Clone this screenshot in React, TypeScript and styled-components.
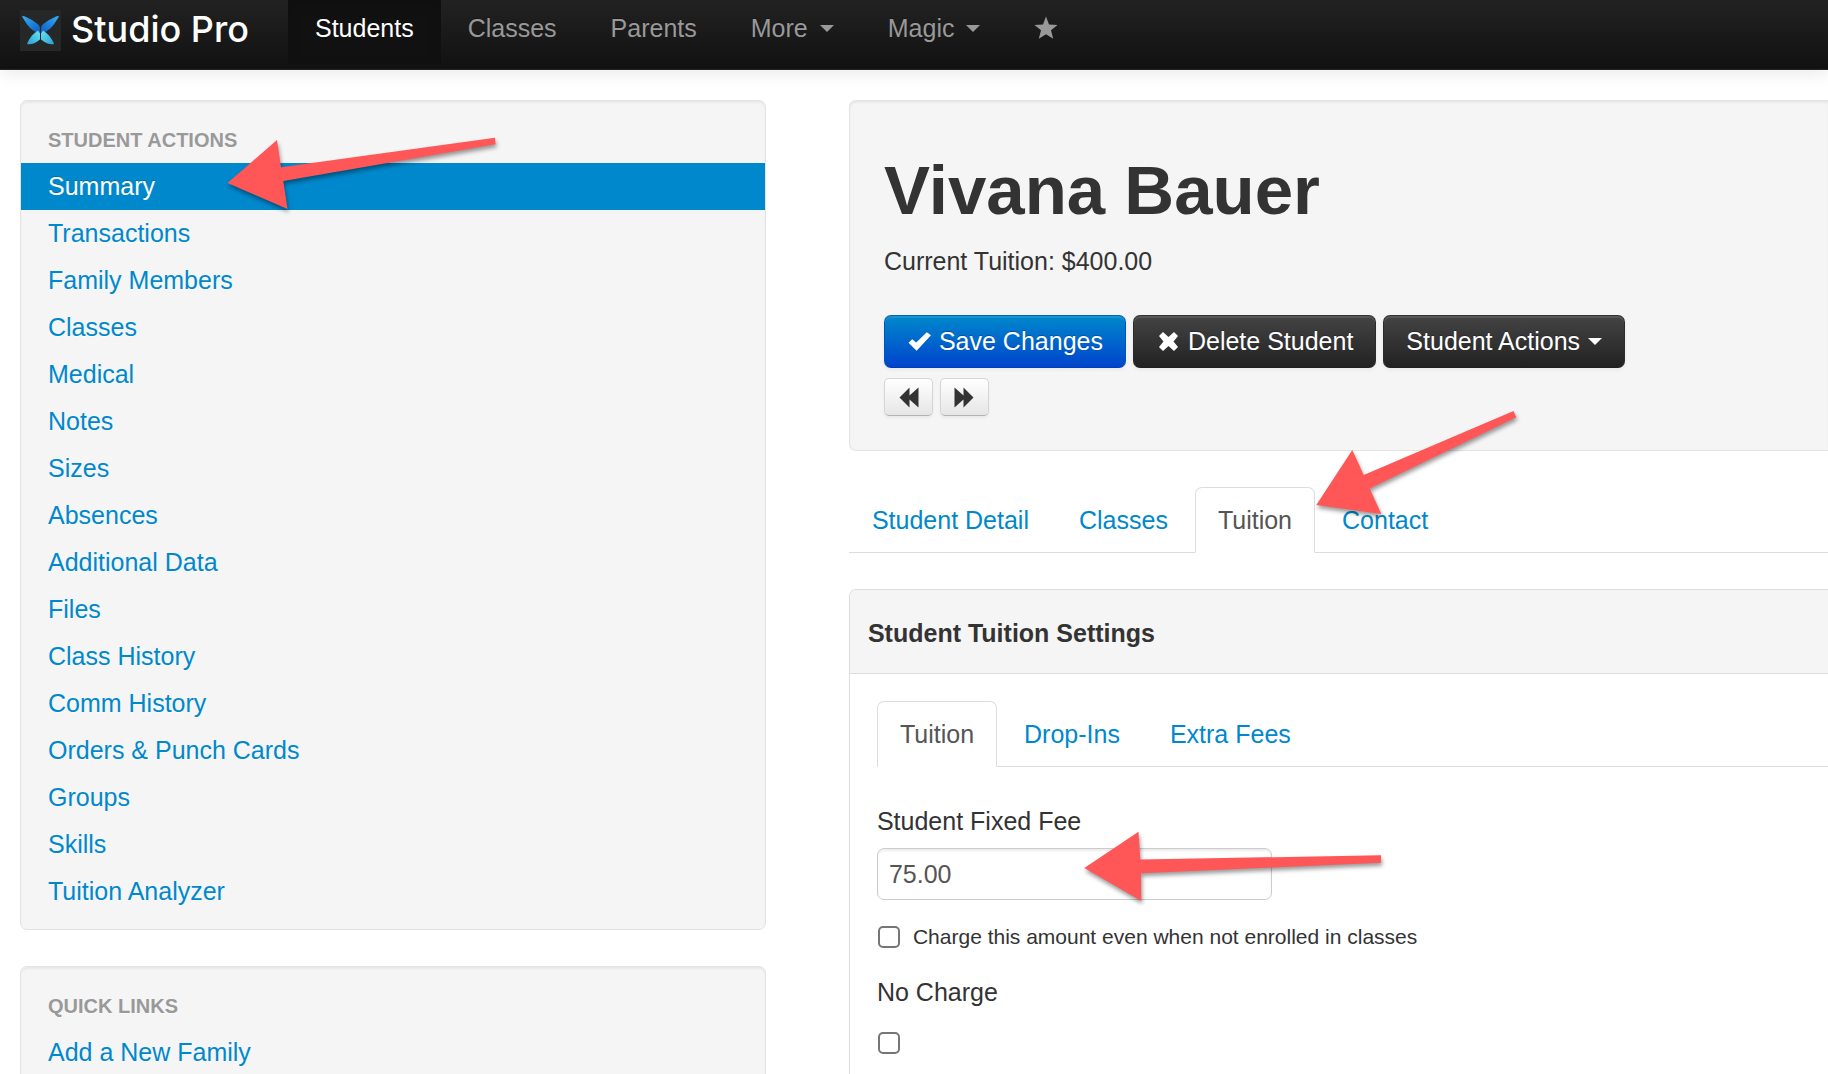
import React from "react";
import styled, { createGlobalStyle, css } from "styled-components";

const GlobalStyle = createGlobalStyle`
  *, *::before, *::after { box-sizing: border-box; }
  html { scrollbar-width: none; overflow-x: hidden; }
  body {
    margin: 0;
    background: #fff;
    color: #333;
    font-family: "Helvetica Neue", "Liberation Sans", Arial, sans-serif;
    font-size: 25px;
    line-height: 36px;
  }
  button, input { font-family: inherit; }
`;

const linkBlue = "#0088cc";
const wellGrey = "#f5f5f5";

/* ---------- top bar ---------- */

const Navbar = styled.header`
  display: flex;
  height: 70px;
  padding-left: 20px;
  background: linear-gradient(to bottom, #222, #111);
  border-bottom: 1px solid #252525;
  box-shadow: 0 2px 18px rgba(0, 0, 0, 0.1);
`;

const Brand = styled.a`
  display: flex;
  align-items: center;
  gap: 10px;
  width: 268px;
  height: 61px;
  color: #fff;
  font-family: Inter, "Open Sans", sans-serif;
  font-size: 36px;
  font-weight: 500;
  text-decoration: none;
  white-space: nowrap;
`;

const BrandName = styled.span`
  padding-bottom: 4px;
`;

const NavLinks = styled.nav`
  display: flex;
`;

const NavLink = styled.a<{ $active?: boolean }>`
  display: flex;
  align-items: center;
  height: 64px;
  padding: 0 27px 8px;
  color: ${(p) => (p.$active ? "#fff" : "#999")};
  background: ${(p) => (p.$active ? "#111" : "transparent")};
  box-shadow: ${(p) => (p.$active ? "inset 0 5px 14px rgba(0, 0, 0, 0.125)" : "none")};
  text-shadow: 0 -1px 0 rgba(0, 0, 0, 0.25);
  text-decoration: none;
`;

const Caret = styled.span<{ $gap: number }>`
  margin-left: ${(p) => p.$gap}px;
  border-top: 7px solid currentColor;
  border-left: 7px solid transparent;
  border-right: 7px solid transparent;
`;

/* ---------- page ---------- */

const Columns = styled.div`
  display: grid;
  grid-template-columns: minmax(0, 16fr) minmax(0, 21fr);
  column-gap: 83px;
  padding: 30px 0 0 20px;
`;

const Sidebar = styled.aside`
  display: flex;
  flex-direction: column;
  gap: 36px;
`;

const Main = styled.main`
  display: flex;
  flex-direction: column;
`;

const well = css`
  background: ${wellGrey};
  border: 1px solid #e3e3e3;
  box-shadow: inset 0 2px 2px rgba(0, 0, 0, 0.05);
`;

const SideWell = styled.section`
  ${well}
  border-radius: 7px;
  padding: 16px 0 14px;
`;

const SideHeading = styled.h2`
  margin: 0;
  padding: 5px 27px;
  color: #999;
  font-size: 20px;
  font-weight: 700;
  text-shadow: 0 1px 0 rgba(255, 255, 255, 0.5);
  text-transform: uppercase;
`;

const SideList = styled.ul`
  margin: 0;
  padding: 0;
  list-style: none;
`;

const SideItem = styled.li`
  position: relative;
`;

const SideLink = styled.a<{ $active?: boolean }>`
  display: block;
  height: 47px;
  padding: 5px 27px 6px;
  color: ${(p) => (p.$active ? "#fff" : linkBlue)};
  background: ${(p) => (p.$active ? linkBlue : "transparent")};
  text-shadow: ${(p) => (p.$active ? "0 -1px 0 rgba(0, 0, 0, 0.2)" : "0 1px 0 rgba(255, 255, 255, 0.5)")};
  text-decoration: none;
`;

const StudentWell = styled.section`
  ${well}
  border-right: 0;
  border-radius: 7px 0 0 7px;
  padding: 53px 34px 34px;
`;

const StudentName = styled.h1`
  margin: 0 0 15px;
  font-size: 69px;
  line-height: 74px;
  font-weight: 700;
`;

const Summary = styled.p`
  margin: 0 0 36px;
`;

const ButtonRow = styled.div`
  display: flex;
  gap: 7px;
  margin-bottom: 10px;

  &:last-child { margin-bottom: 0; }
`;

type Tone = "primary" | "inverse";

const tones = {
  primary: css`
    background: linear-gradient(to bottom, #0088cc, #0044cc);
    border-color: #0067b0 #0055b8 #003db8;
  `,
  inverse: css`
    background: linear-gradient(to bottom, #444, #222);
    border-color: #333 #2b2b2b #1f1f1f;
  `,
};

const ActionButton = styled.button<{ $tone: Tone }>`
  display: inline-flex;
  align-items: center;
  height: 53px;
  padding: 0 22px 1px;
  border: 1px solid;
  border-radius: 7px;
  color: #fff;
  font-size: 25px;
  line-height: 36px;
  white-space: nowrap;
  text-shadow: 0 -1px 0 rgba(0, 0, 0, 0.25);
  box-shadow: inset 0 2px 0 rgba(255, 255, 255, 0.1), 0 2px 4px rgba(0, 0, 0, 0.05);
  ${(p) => tones[p.$tone]}

  svg { margin-right: 7px; }
`;

const StepButton = styled.button`
  display: inline-flex;
  align-items: center;
  justify-content: center;
  width: 49px;
  height: 38px;
  padding: 0;
  border: 1px solid #d6d6d6;
  border-bottom-color: #b3b3b3;
  border-radius: 5px;
  background: linear-gradient(to bottom, #fff, #e6e6e6);
  box-shadow: 0 2px 3px rgba(0, 0, 0, 0.05);
`;

/* ---------- tabs ---------- */

const TabBar = styled.nav`
  display: flex;
  gap: 4px;
  border-bottom: 1px solid #ddd;
`;

const TabItem = styled.div`
  position: relative;
  margin-bottom: -1px;
`;

const Tab = styled.a<{ $active?: boolean }>`
  display: block;
  padding: 14px 22px;
  border: 1px solid ${(p) => (p.$active ? "#ddd" : "transparent")};
  border-bottom-color: ${(p) => (p.$active ? "#fff" : "transparent")};
  border-radius: 7px 7px 0 0;
  color: ${(p) => (p.$active ? "#555" : linkBlue)};
  background: ${(p) => (p.$active ? "#fff" : "transparent")};
  text-decoration: none;
  white-space: nowrap;
`;

const MainTabs = styled.div`
  margin: 36px 0;
`;

/* ---------- settings box ---------- */

const Box = styled.section`
  flex: 1;
  border: 1px solid #ddd;
  border-width: 1px 0 0 1px;
  border-radius: 7px 0 0 0;
`;

const BoxHeading = styled.h2`
  margin: 0;
  padding: 25px 18px 22px;
  border-bottom: 1px solid #ddd;
  border-radius: 6px 0 0 0;
  background: ${wellGrey};
  font-size: 25px;
  line-height: 36px;
  font-weight: 700;
`;

const BoxBody = styled.div`
  padding: 27px 0 0 27px;
`;

const Form = styled.form`
  display: flex;
  flex-direction: column;
  align-items: flex-start;
  padding-top: 36px;
`;

const FieldLabel = styled.label`
  margin-bottom: 9px;
`;

const FieldWrap = styled.div`
  position: relative;
  width: 395px;
  max-width: 100%;
  margin-bottom: 19px;
`;

const TextInput = styled.input`
  display: block;
  width: 100%;
  height: 52px;
  padding: 0 11px;
  border: 1px solid #ccc;
  border-radius: 7px;
  background: #fff;
  color: #555;
  font-size: 25px;
  box-shadow: inset 0 2px 2px rgba(0, 0, 0, 0.075);
`;

const CheckLine = styled.label`
  display: flex;
  align-items: center;
  gap: 13px;
  margin-bottom: 19px;
  font-size: 21px;
`;

const CheckBox = styled.input`
  appearance: none;
  width: 22px;
  height: 22px;
  margin: 0;
  border: 2px solid #767676;
  border-radius: 5px;
  background: #fff;
`;

const CheckRow = styled.div`
  padding-left: 1px;
`;

const LooseCheck = styled(CheckRow)`
  display: flex;
  align-items: center;
  height: 36px;
  margin-top: 6px;
`;

/* ---------- pointer arrows ---------- */

const Pointer = styled.svg<{ $left: number; $top: number }>`
  position: absolute;
  z-index: 2;
  left: ${(p) => p.$left}px;
  top: ${(p) => p.$top}px;
  overflow: visible;
  pointer-events: none;
  filter: drop-shadow(1px 3px 2px rgba(0, 0, 0, 0.4));
`;

function Arrow({ left, top, points }: { left: number; top: number; points: string }) {
  return (
    <Pointer $left={left} $top={top} width="300" height="110" aria-hidden="true">
      <polygon points={points} fill="#ff5757" />
    </Pointer>
  );
}

/* ---------- icons ---------- */

function Logo() {
  return (
    <svg width="41" height="41" viewBox="0 0 41 41" aria-hidden="true">
      <defs>
        <linearGradient id="wingTop" x1="0" y1="0" x2="1" y2="1">
          <stop offset="0" stopColor="#35b4f0" />
          <stop offset="0.5" stopColor="#1d83dd" />
          <stop offset="1" stopColor="#1457b8" />
        </linearGradient>
        <linearGradient id="wingLow" x1="1" y1="0" x2="0" y2="1">
          <stop offset="0" stopColor="#6be3ee" />
          <stop offset="1" stopColor="#259fd8" />
        </linearGradient>
      </defs>
      <rect width="41" height="41" fill="#262828" />
      <g id="wing">
        <path d="M2 6.5 Q3 5.600 5 6.600 Q13 10 18 14.300 Q20 16 20 18.500 V24 L14 21 Q10 18.500 7.500 15 Q4.500 10.500 2 6.500Z" fill="url(#wingTop)" />
        <path d="M18 20.500 L20 23.500 V29.500 Q17 32 13.500 33.500 Q9 35 7 33.800 Q8.500 30 12 25.500 Q15 22.500 18 20.500Z" fill="url(#wingLow)" />
      </g>
      <use href="#wing" transform="translate(41 0) scale(-1 1)" />
    </svg>
  );
}

const StarIcon = () => (
  <svg width="24" height="24" viewBox="0 0 24 24" aria-hidden="true">
    <path d="M12 0.500 L15 8.500 L23.500 9 L17 14.300 L19.200 22.800 L12 18.200 L4.800 22.800 L7 14.300 L0.500 9 L9 8.500Z" fill="#999" />
  </svg>
);

const CheckIcon = () => (
  <svg width="25" height="25" viewBox="0 0 25 25" aria-hidden="true">
    <path d="M1.500 13.800 L5.200 10.200 L9.200 13.600 L19.800 3.200 L24 6.200 L9.600 21.800Z" fill="#fff" />
  </svg>
);

const CrossIcon = () => (
  <svg width="25" height="25" viewBox="0 0 25 25" aria-hidden="true">
    <path d="M7 3 L12.500 8 L18 3 L22 7 L17.500 12.500 L22 18 L18 22 L12.500 17 L7 22 L3 18 L7.500 12.500 L3 7Z" fill="#fff" />
  </svg>
);

const BackwardIcon = () => (
  <svg width="25" height="25" viewBox="0 0 25 25" aria-hidden="true">
    <path d="M3.500 12.500 L13.500 2.500 V10.500 L22.500 2.500 V22.500 L13.500 14.500 V22.500Z" fill="#333" />
  </svg>
);

const ForwardIcon = () => (
  <svg width="25" height="25" viewBox="0 0 25 25" aria-hidden="true">
    <path d="M21.500 12.500 L11.500 2.500 V10.500 L2.500 2.500 V22.500 L11.500 14.500 V22.500Z" fill="#333" />
  </svg>
);

/* ---------- data ---------- */

const studentActions = [
  "Summary", "Transactions", "Family Members", "Classes", "Medical", "Notes", "Sizes", "Absences",
  "Additional Data", "Files", "Class History", "Comm History", "Orders & Punch Cards", "Groups",
  "Skills", "Tuition Analyzer",
];

export default function App() {
  return (
    <>
      <GlobalStyle />
      <Navbar>
        <Brand href="#">
          <Logo />
          <BrandName>Studio Pro</BrandName>
        </Brand>
        <NavLinks>
          <NavLink href="#" $active>Students</NavLink>
          <NavLink href="#">Classes</NavLink>
          <NavLink href="#">Parents</NavLink>
          <NavLink href="#">More<Caret $gap={12} /></NavLink>
          <NavLink href="#">Magic<Caret $gap={12} /></NavLink>
          <NavLink href="#" aria-label="Favorites"><StarIcon /></NavLink>
        </NavLinks>
      </Navbar>

      <Columns>
        <Sidebar>
          <SideWell>
            <SideHeading>Student Actions</SideHeading>
            <SideList>
              {studentActions.map((name, i) => (
                <SideItem key={name}>
                  <SideLink href="#" $active={i === 0}>{name}</SideLink>
                  {i === 0 && (
                    <Arrow left={199} top={-33} points="7.500,53 57,10 61,37.300 275,7.700 275.500,14.300 63.300,51 67.500,79" />
                  )}
                </SideItem>
              ))}
            </SideList>
          </SideWell>
          <SideWell>
            <SideHeading>Quick Links</SideHeading>
            <SideList>
              <SideItem><SideLink href="#">Add a New Family</SideLink></SideItem>
            </SideList>
          </SideWell>
        </Sidebar>

        <Main>
          <StudentWell>
            <StudentName>Vivana Bauer</StudentName>
            <Summary>Current Tuition: $400.00</Summary>
            <ButtonRow>
              <ActionButton type="button" $tone="primary"><CheckIcon />Save Changes</ActionButton>
              <ActionButton type="button" $tone="inverse"><CrossIcon />Delete Student</ActionButton>
              <ActionButton type="button" $tone="inverse">Student Actions<Caret $gap={8} /></ActionButton>
            </ButtonRow>
            <ButtonRow>
              <StepButton type="button" aria-label="Previous student"><BackwardIcon /></StepButton>
              <StepButton type="button" aria-label="Next student"><ForwardIcon /></StepButton>
            </ButtonRow>
          </StudentWell>

          <MainTabs>
            <TabBar>
              <TabItem><Tab href="#">Student Detail</Tab></TabItem>
              <TabItem><Tab href="#">Classes</Tab></TabItem>
              <TabItem>
                <Tab href="#" $active>Tuition</Tab>
                <Arrow left={115} top={-82} points="6.300,100 42.300,45 53.700,70 203.500,6 206.300,12.300 59.700,83.500 71.300,109" />
              </TabItem>
              <TabItem><Tab href="#">Contact</Tab></TabItem>
            </TabBar>
          </MainTabs>

          <Box>
            <BoxHeading>Student Tuition Settings</BoxHeading>
            <BoxBody>
              <TabBar>
                <TabItem><Tab href="#" $active>Tuition</Tab></TabItem>
                <TabItem><Tab href="#">Drop-Ins</Tab></TabItem>
                <TabItem><Tab href="#">Extra Fees</Tab></TabItem>
              </TabBar>
              <Form>
                <FieldLabel htmlFor="fixed-fee">Student Fixed Fee</FieldLabel>
                <FieldWrap>
                  <TextInput id="fixed-fee" type="text" defaultValue="75.00" />
                  <Arrow left={203} top={-23} points="4.300,43 58.500,6.700 60.300,34.500 301,30.300 301,37.700 61,48.300 61.300,76" />
                </FieldWrap>
                <CheckRow>
                  <CheckLine>
                    <CheckBox type="checkbox" />
                    Charge this amount even when not enrolled in classes
                  </CheckLine>
                </CheckRow>
                <FieldLabel htmlFor="no-charge">No Charge</FieldLabel>
                <LooseCheck>
                  <CheckBox id="no-charge" type="checkbox" />
                </LooseCheck>
              </Form>
            </BoxBody>
          </Box>
        </Main>
      </Columns>
    </>
  );
}
